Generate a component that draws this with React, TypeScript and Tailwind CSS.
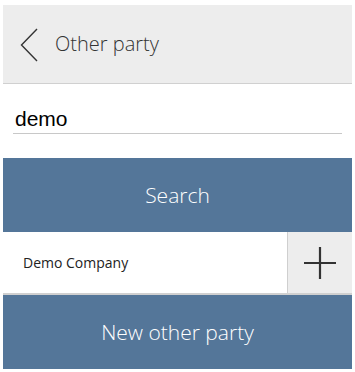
import React from "react";

export default function App() {
  const font = { fontFamily: '"Open Sans", "Segoe UI", sans-serif' };
  return (
    <div className="w-[355px] h-[372px] bg-white pt-[5px] px-[3px]" style={font}>
      <div className="flex flex-col w-[349px]">
        <div className="h-[78px] bg-[#ededed] flex items-center border-b border-[#d0d0d0] box-content">
          <svg width="18" height="34" viewBox="0 0 18 34" className="ml-[17px] mt-[2px]">
            <path d="M17 1 L1.5 17 L17 33" fill="none" stroke="#333" strokeWidth="1.4" />
          </svg>
          <span className="ml-[17px] text-[20px] font-light text-[#333] leading-none">Other party</span>
        </div>
        <div className="h-[74px] flex flex-col px-[10px] pt-[21px]">
          <div className="h-[29px] border-b border-[#c8c8c8] flex items-end pb-[4px] pl-[2px]">
            <span className="text-[21px] leading-none text-black" style={{ fontFamily: '"Liberation Sans", Arial, sans-serif' }}>demo</span>
          </div>
        </div>
        <div className="h-[74px] bg-[#547699] flex items-center justify-center">
          <span className="text-[21px] font-light text-white leading-none">Search</span>
        </div>
        <div className="h-[61px] flex border-b-2 border-[#d0d0d0] box-content">
          <div className="flex-1 flex items-center pl-[20px]">
            <span className="text-[14px] text-[#222]">Demo Company</span>
          </div>
          <div className="w-[65px] bg-[#ededed] border-l border-[#cfcfcf] flex items-center justify-center">
            <svg width="32" height="32" viewBox="0 0 32 32">
              <path d="M0 16 H32 M16 0 V32" stroke="#333" strokeWidth="2.2" />
            </svg>
          </div>
        </div>
        <div className="h-[74px] bg-[#547699] flex items-center justify-center">
          <span className="text-[21px] font-light text-white leading-none">New other party</span>
        </div>
      </div>
    </div>
  );
}
